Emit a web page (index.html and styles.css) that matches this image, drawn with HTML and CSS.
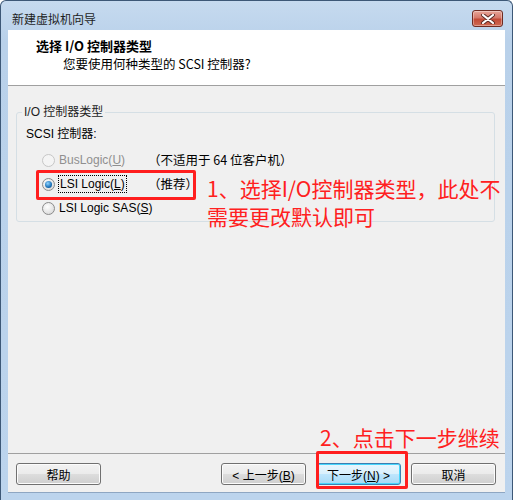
FILE: index.html
```html
<!DOCTYPE html>
<html lang="zh-CN">
<head>
    <meta charset="UTF-8">
    <title>新建虚拟机向导</title>
    <link rel="stylesheet" href="styles.css">
</head>
<body>
    <div class="window">
        <div class="titlebar">
            <span class="title">新建虚拟机向导</span>
            <span class="close">
                <svg width="16" height="10" viewBox="0 0 16 10">
                    <path d="M3 1 L13 9 M13 1 L3 9" stroke="#5a2b26" stroke-width="4" stroke-linecap="round"/>
                    <path d="M3 1 L13 9 M13 1 L3 9" stroke="#ffffff" stroke-width="2.2" stroke-linecap="round"/>
                </svg>
            </span>
        </div>

        <div class="client">
            <div class="header">
                <div class="header-title">选择 I/O 控制器类型</div>
                <div class="header-sub">您要使用何种类型的 SCSI 控制器?</div>
            </div>

            <div class="body">
                <fieldset class="group">
                    <legend>I/O 控制器类型</legend>
                    <div class="caption">SCSI 控制器:</div>
                    <div class="row disabled">
                        <span class="radio"></span>
                        <span class="name"><span>BusLogic(<u>U</u>)</span></span>
                        <span class="note">（不适用于 64 位客户机）</span>
                    </div>
                    <div class="row">
                        <span class="radio checked"></span>
                        <span class="name"><span class="focus">LSI Logic(<u>L</u>)</span></span>
                        <span class="note">（推荐）</span>
                    </div>
                    <div class="row">
                        <span class="radio"></span>
                        <span class="name"><span>LSI Logic SAS(<u>S</u>)</span></span>
                    </div>
                </fieldset>
            </div>

            <div class="footer">
                <button class="btn">帮助</button>
                <span class="spacer"></span>
                <button class="btn">&lt; 上一步(<u>B</u>)</button>
                <button class="btn default">下一步(<u>N</u>) &gt;</button>
                <button class="btn">取消</button>
            </div>
        </div>

        <!-- annotations drawn over the screenshot -->
        <div class="mark mark-radio"></div>
        <div class="note-red note-1">1、选择I/O控制器类型，此处不<br>需要更改默认即可</div>
        <div class="mark mark-next"></div>
        <div class="note-red note-2">2、点击下一步继续</div>
    </div>
</body>
</html>
```

FILE: styles.css
```css
body {
    margin: 0;
    font-family: "Liberation Sans", "Noto Sans CJK SC", sans-serif;
    font-size: 12px;
    color: #000;
    background: #ffffff;
}
.window {
    position: relative;
    width: 511px;
    height: 499px;
    border: 1px solid #3d5877;
    border-bottom-width: 0;
    border-radius: 6px 6px 0 0;
    background: linear-gradient(#c6daef, #b9d1ea 40px, #bcd4ed);
    display: flex;
    flex-direction: column;
}
.titlebar {
    height: 29px;
    display: flex;
    align-items: flex-start;
    padding-left: 11px;
    padding-right: 9px;
    box-sizing: border-box;
}
.title {
    flex: 1;
    padding-top: 9px;
    line-height: 18px;
    font-family: "Noto Sans CJK SC", sans-serif;
    font-size: 12px;
    color: #1e1e1e;
}
.close {
    width: 29px;
    height: 15px;
    margin-top: 9px;
    border: 1px solid #6e2b22;
    border-radius: 3px;
    background: linear-gradient(#e7a699, #d5786a 45%, #c24a36 55%, #cf6a53);
    display: flex;
    align-items: center;
    justify-content: center;
    box-shadow: inset 0 0 0 1px rgba(255,255,255,0.35);
}
.client {
    margin: 0 7px;
    height: 462px;
    border-bottom: 1px solid #8ea6c2;
    background: #f0f0f0;
    display: flex;
    flex-direction: column;
}
.header {
    height: 56px;
    background: #ffffff;
    border-bottom: 1px solid #a0a0a0;
    padding: 7px 0 0 28px;
    box-sizing: border-box;
    line-height: 18px;
}
.header-title {
    font-family: "Noto Sans CJK SC", serif;
    font-size: 13px;
    font-weight: bold;
}
.header-sub {
    padding-left: 27px;
    font-family: "Noto Sans CJK SC", sans-serif;
    font-size: 12.5px;
}
.body {
    flex: 1;
    border-bottom: 1px solid #a0a0a0;
}
.group {
    margin: 17px 10px 0 8px;
    padding: 0 0 1px 9px;
    border: 1px solid #d5dfe5;
    border-radius: 3px;
    line-height: 18px;
}
.group legend {
    margin-left: -4px;
    padding: 0 2px;
    color: #1e1e1e;
}
.caption {
    margin-top: 4px;
    margin-bottom: 5px;
}
.row {
    height: 24px;
    display: flex;
    align-items: center;
    white-space: nowrap;
}
.radio {
    flex-shrink: 0;
    width: 11px;
    height: 11px;
    margin-left: 16px;
    margin-right: 4px;
    border: 1px solid #8b8b8b;
    border-radius: 50%;
    background: radial-gradient(circle at 40% 35%, #ffffff, #e4e4e4 60%, #cfcfcf);
    position: relative;
}
.radio.checked::after {
    content: "";
    position: absolute;
    left: 2px;
    top: 2px;
    width: 7px;
    height: 7px;
    border-radius: 50%;
    background: radial-gradient(circle at 40% 35%, #8fd3ff, #1c72b8 60%, #0f3e73);
}
.disabled .radio {
    border-color: #c6c6c6;
    background: #f4f4f4;
}
.disabled {
    color: #8f8f8f;
}
.disabled .note {
    color: #000;
}
.name {
    min-width: 89px;
    flex-shrink: 0;
}
.name .focus {
    padding: 0 1px;
    outline: 1px dotted #000;
    line-height: 16px;
    display: inline-block;
}
.note {
    font-family: "Noto Sans CJK SC", sans-serif;
    font-size: 12.5px;
}
.footer {
    height: 38px;
    display: flex;
    align-items: flex-start;
    padding: 9px 9px 0 8px;
    box-sizing: border-box;
    gap: 10px;
}
.spacer {
    flex: 1;
}
.btn {
    width: 85px;
    height: 22px;
    padding: 0;
    border: 1px solid #707070;
    border-radius: 3px;
    background: linear-gradient(#f2f2f2, #ebebeb 50%, #dddddd 50%, #cfcfcf);
    font-family: "Liberation Sans", "Noto Sans CJK SC", sans-serif;
    font-size: 12px;
    color: #000;
    box-shadow: inset 0 0 0 1px #fcfcfc;
}
.btn.default {
    border-color: #3c7fb1;
    background: linear-gradient(#eaf6fd, #d9f0fc 50%, #bee6fd 50%, #a7d9f5);
    box-shadow: inset 0 0 0 1px #48d6fc;
}
.mark {
    position: absolute;
    border: 3px solid #ff1e1e;
    border-radius: 2px;
}
.mark-radio {
    left: 35px;
    top: 169px;
    width: 154px;
    height: 24px;
}
.mark-next {
    left: 315px;
    top: 450px;
    width: 86px;
    height: 32px;
}
.note-red {
    position: absolute;
    font-family: "Noto Sans CJK SC", sans-serif;
    font-size: 21px;
    line-height: 28px;
    color: #ff2020;
    white-space: nowrap;
}
.note-1 {
    left: 206px;
    top: 173px;
}
.note-2 {
    left: 319px;
    top: 422px;
}
```
